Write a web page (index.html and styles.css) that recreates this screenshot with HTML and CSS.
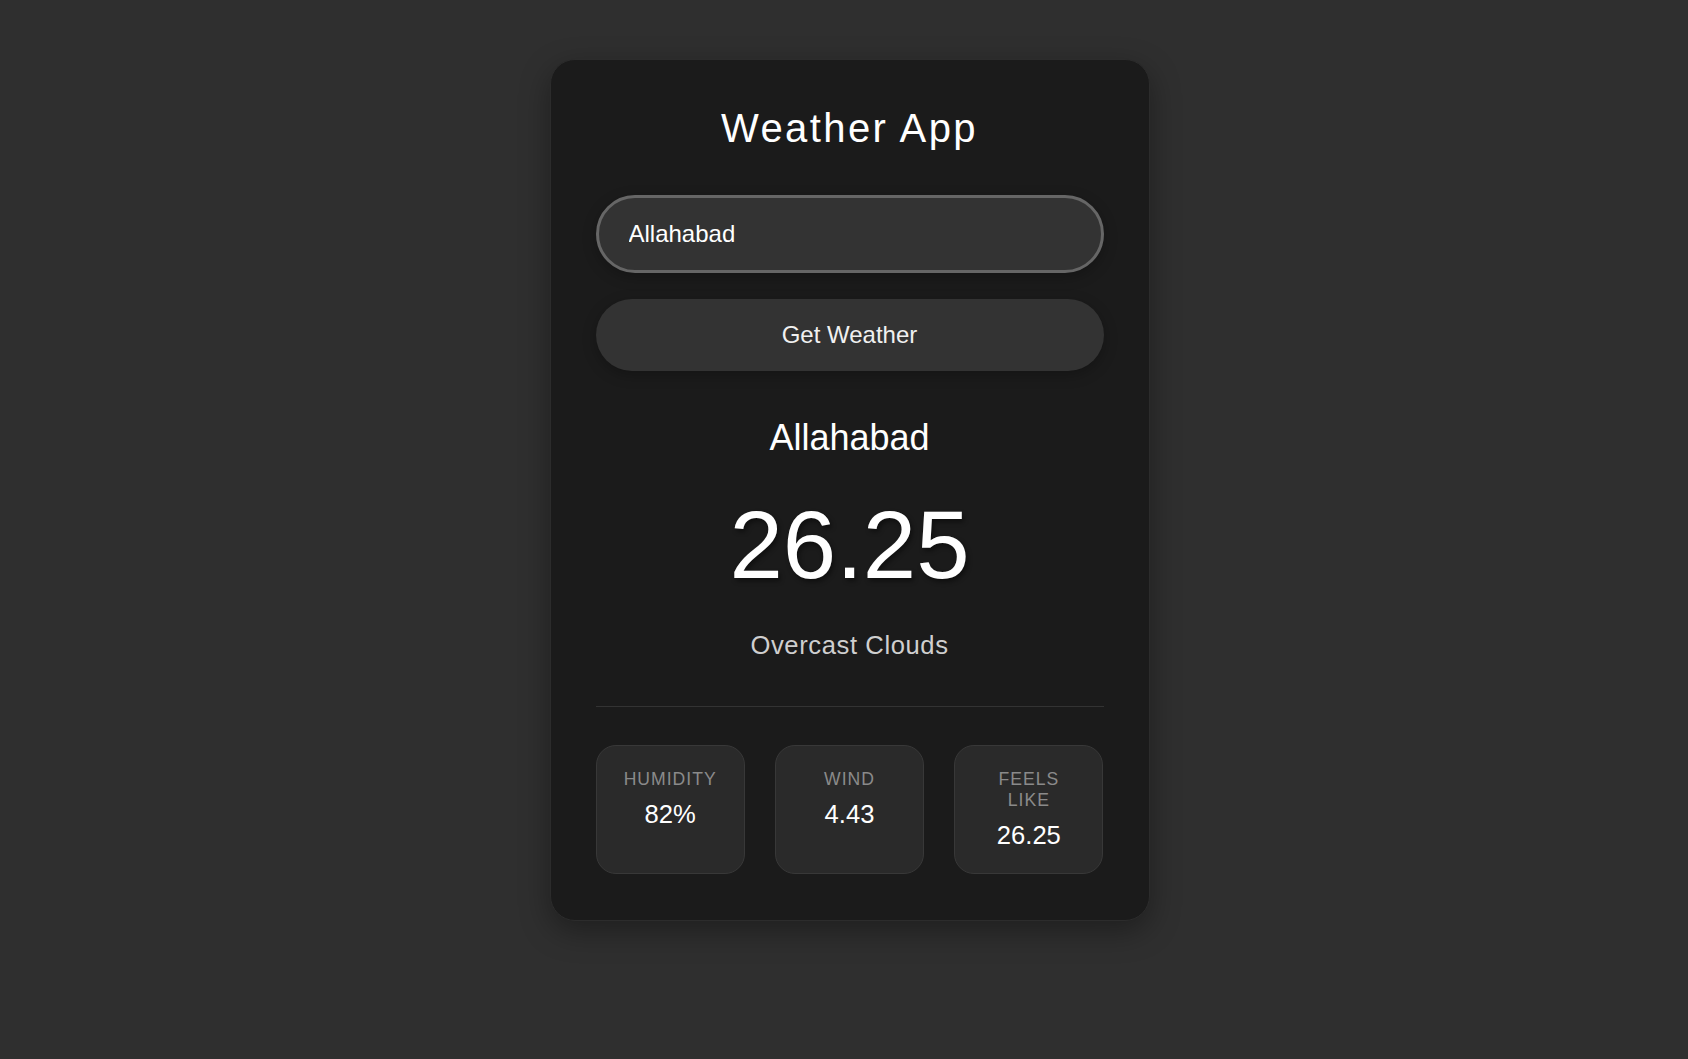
FILE: index.html
```html
<!DOCTYPE html>
<html lang="en">
<head>
<meta charset="utf-8">
<title>Weather App</title>
<link rel="stylesheet" href="styles.css">
</head>
<body>
<main class="page">
  <section class="card">
    <h1 class="title">Weather App</h1>
    <input class="city-input" type="text" value="Allahabad">
    <button class="get-btn" type="button">Get Weather</button>
    <h2 class="city">Allahabad</h2>
    <div class="temp">26.25</div>
    <p class="desc">Overcast Clouds</p>
    <hr class="divider">
    <div class="stats">
      <div class="stat">
        <div class="stat-label">HUMIDITY</div>
        <div class="stat-value">82%</div>
      </div>
      <div class="stat">
        <div class="stat-label">WIND</div>
        <div class="stat-value">4.43</div>
      </div>
      <div class="stat">
        <div class="stat-label">FEELS LIKE</div>
        <div class="stat-value">26.25</div>
      </div>
    </div>
  </section>
</main>
</body>
</html>
```

FILE: styles.css
```css
* { box-sizing: border-box; }

html, body {
  margin: 0;
  padding: 0;
  background: #2f2f2f;
  font-family: "Liberation Sans", Arial, sans-serif;
  color: #fff;
}

.page {
  display: flex;
  justify-content: center;
  align-items: flex-start;
  padding: 59px 0 0 11px;
  min-height: 1059px;
}

.card {
  flex: 0 0 600px;
  width: 600px;
  padding: 46px 45px 46px;
  background: #1b1b1b;
  border: 1px solid #2c2c2c;
  border-radius: 25px;
  box-shadow: 0 10px 30px rgba(0, 0, 0, 0.35);
  display: flex;
  flex-direction: column;
  align-items: stretch;
  text-align: center;
}

.title {
  margin: 0 0 44px;
  font-size: 40px;
  font-weight: 400;
  letter-spacing: 2.4px;
  line-height: normal;
  color: #fff;
}

.city-input {
  width: 100%;
  height: 78px;
  padding: 0 30px;
  border: 3px solid #666;
  border-radius: 39px;
  background: #333;
  color: #fff;
  font-family: "Liberation Sans", Arial, sans-serif;
  font-size: 24px;
  outline: none;
  box-shadow: 0 4px 14px rgba(0, 0, 0, 0.25);
}

.get-btn {
  margin-top: 26px;
  width: 100%;
  height: 72px;
  border: none;
  border-radius: 36px;
  background: #333;
  color: #f0f0f0;
  font-family: "Liberation Sans", Arial, sans-serif;
  font-size: 24px;
  box-shadow: 0 4px 14px rgba(0, 0, 0, 0.25);
}

.city {
  margin: 46px 0 0;
  font-size: 36px;
  font-weight: 400;
  line-height: normal;
  color: #fff;
}

.temp {
  margin-top: 31px;
  font-size: 96px;
  line-height: normal;
  color: #fff;
  text-shadow: 2px 3px 5px rgba(0, 0, 0, 0.45);
}

.desc {
  margin: 31px 0 0;
  font-size: 25.6px;
  letter-spacing: 0.6px;
  line-height: normal;
  color: #cfcfcf;
}

.divider {
  margin: 46px 0 0;
  border: none;
  border-top: 1px solid #333;
  height: 0;
}

.stats {
  margin-top: 38px;
  display: grid;
  grid-template-columns: repeat(3, 1fr);
  gap: 30px;
}

.stat {
  padding: 23px 20px;
  background: #2a2a2a;
  border: 1px solid #383838;
  border-radius: 20px;
}

.stat-label {
  font-size: 17.6px;
  letter-spacing: 1px;
  line-height: normal;
  color: #8a8a8a;
}

.stat-value {
  margin-top: 10px;
  font-size: 25.6px;
  line-height: normal;
  color: #fff;
}
```
